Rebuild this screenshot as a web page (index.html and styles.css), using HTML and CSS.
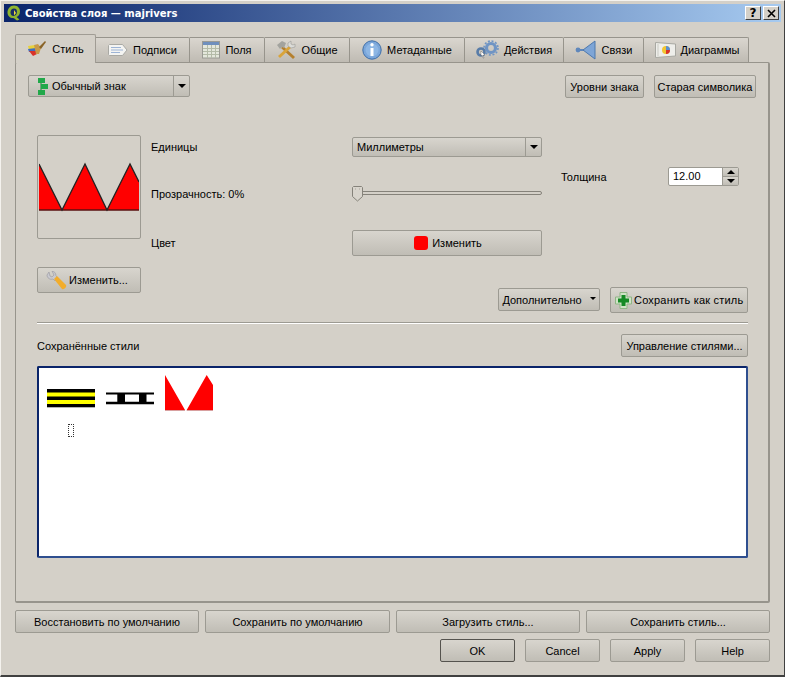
FILE: index.html
```html
<!DOCTYPE html>
<html>
<head>
<meta charset="utf-8">
<title>Свойства слоя — majrivers</title>
<link rel="stylesheet" href="styles.css">
</head>
<body>
<div class="window">
  <div class="titlebar">
    <svg class="qgis" width="16" height="16" viewBox="0 0 16 16"><path d="M8 .5C4 .5 1.500 4 1.500 7.500S4 13 7 13c1.500 0 2.500 1.500 4 2.500l2.500-1-3-2.500c2-1 3.500-2.500 3.500-5.500C14 3.500 12 .5 8 .5z" fill="#8fb52e"/><path d="M8 3.500c-2 0-3.500 1.500-3.500 4S6 11 7.500 11 11 9.500 11 7 10 3.500 8 3.500z" fill="#1a2f66"/><path d="M8 5 10 8 8 10.500z" fill="#f2e23a"/></svg>
    <span class="title">Свойства слоя — majrivers</span>
    <span class="capbtn">?</span>
    <span class="capbtn">
      <svg width="9" height="9" viewBox="0 0 9 9"><path d="M1 1l7 7M8 1L1 8" stroke="#000" stroke-width="1.600"/></svg>
    </span>
  </div>

  <div class="tabs">
    <div class="tab active tab-style">
      <svg width="20" height="18" viewBox="0 0 20 18"><path d="M1 6l7-1 2 4-8 1z" fill="#e8d23c"/><path d="M1 9l8-1 1 3-8 1z" fill="#3f6fc0"/><path d="M2 11l8 0 0 3-4 2z" fill="#d8322a"/><path d="M7 5l4-1 3 4-2 6-3 0z" fill="#c89a4a"/><path d="M12 7l6-6 1 1-5 7z" fill="#8a6428"/></svg>
      Стиль
    </div>
    <div class="tab tab-labels">
      <svg width="20" height="14" viewBox="0 0 20 14"><path d="M1.500 1.500h13l4.500 5.500-4.500 5.500h-13l-1-1v-9z" fill="#f4f4f2" stroke="#a9a9a4"/><path d="M3 4.500h10M3 7h12M3 9.500h9" stroke="#9db4d6"/></svg>
      Подписи
    </div>
    <div class="tab tab-fields">
      <svg width="18" height="18" viewBox="0 0 18 18"><rect x=".5" y=".5" width="17" height="16.500" fill="#e4e7dc" stroke="#9a9a94"/><rect x="1" y="1" width="16" height="3" fill="#6f8fbd"/><path d="M1 7.500h16M1 10.500h16M1 13.500h16M5.500 4v13M9.500 4v13M13.500 4v13" stroke="#b4bba8"/></svg>
      Поля
    </div>
    <div class="tab tab-general">
      <svg width="20" height="20" viewBox="0 0 20 20"><path d="M7 6l12 11-2 2L5 8z" fill="#b5802e"/><path d="M1 5l5-4 4 2-2 5-2-1-2 2z" fill="#a3a39e"/><path d="M13 6 2 16l2 2L15 8z" fill="#d9a43a"/><path d="M15 1l-3 2 0 3 3 2 4-1 0-3-2 1-2-1z" fill="#dcdcd8" stroke="#8f8f8a" stroke-width=".5"/></svg>
      Общие
    </div>
    <div class="tab tab-meta">
      <svg width="20" height="20" viewBox="0 0 20 20"><circle cx="10" cy="10" r="9.200" fill="#7aa6da" stroke="#3f6ea8"/><circle cx="10" cy="10" r="6.500" fill="#8db6e4"/><circle cx="10" cy="4.800" r="1.700" fill="#fff"/><path d="M8.500 8h3v8h-3z" fill="#fff"/></svg>
      Метаданные
    </div>
    <div class="tab tab-actions">
      <svg width="23" height="20" viewBox="0 0 23 20"><circle cx="15" cy="8" r="4.500" fill="none" stroke="#6f94c4" stroke-width="3.200"/><circle cx="15" cy="8" r="7" fill="none" stroke="#6f94c4" stroke-width="1.600" stroke-dasharray="2 1.700"/><circle cx="5" cy="12" r="3.500" fill="none" stroke="#587ca8" stroke-width="2.600"/><path d="M5 11l4 4-2 0 1 3-1 0-1-3-1 1z" fill="#fff" stroke="#555" stroke-width=".4"/></svg>
      Действия
    </div>
    <div class="tab tab-links">
      <svg width="22" height="20" viewBox="0 0 22 20"><circle cx="3" cy="10" r="2.400" fill="#5f87bb"/><path d="M4 9h5v2H4z" fill="#5f87bb"/><path d="M8 10l12-9v18z" fill="#7ea5d6" stroke="#4d78ad" stroke-linejoin="round"/></svg>
      Связи
    </div>
    <div class="tab tab-charts">
      <svg width="21" height="16" viewBox="0 0 21 16"><path d="M.5 .5 20.500 2v12L.5 15.500z" fill="#eeeeea" stroke="#a8a8a2"/><path d="M3 2v12" stroke="#c9c9c2"/><circle cx="11" cy="8" r="4" fill="#f2c531"/><path d="M11 8V4a4 4 0 0 1 4 4z" fill="#5d8fd0"/><path d="M11 8h4a4 4 0 0 1-4 4z" fill="#d8322a"/></svg>
      Диаграммы
    </div>
  </div>

  <div class="pane">
    <div class="top-row">
      <div class="combo combo-type">
        <span class="combo-text">
          <svg width="11" height="17" viewBox="0 0 11 17"><path d="M4 3v11M4 7h3" stroke="#1f7a36"/><rect x="1" y="0" width="7" height="5" fill="#22a84a"/><rect x="4" y="6" width="7" height="5" fill="#22a84a"/><rect x="1" y="12" width="7" height="5" fill="#22a84a"/></svg>
          Обычный знак
        </span>
        <span class="combo-arrow"><i class="arrow"></i></span>
      </div>
      <div class="spacer"></div>
      <div class="btn btn-levels">Уровни знака</div>
      <div class="btn btn-old">Старая символика</div>
    </div>

    <div class="symbol-row">
      <div class="preview">
        <svg width="100" height="100" viewBox="0 0 100 100"><path d="M0 27 23 73 46 27 68 73 91 27 100 45V73H0z" fill="#f00"/><path d="M0 73H100" stroke="#5a1010" stroke-width="1.500"/><path d="M0 27 23 73 46 27 68 73 91 27 100 45" fill="none" stroke="#222" stroke-width="1.300"/></svg>
      </div>
      <div class="symbol-form">
        <div class="form-label">Единицы</div>
        <div class="combo combo-units">
          <span class="combo-text">Миллиметры</span>
          <span class="combo-arrow"><i class="arrow"></i></span>
        </div>
        <div class="form-label">Прозрачность: 0%</div>
        <div class="slider">
          <svg class="slider-handle" width="11" height="16" viewBox="0 0 11 16"><path d="M1.500.5h8l1 1v9L5.500 15 .5 10.500v-9z" fill="#d8d4cc" stroke="#85827a"/><path d="M3 3h1M7 3h1" stroke="#a8a49c"/></svg>
        </div>
        <div class="form-label">Цвет</div>
        <div class="btn btn-color"><i class="swatch"></i>Изменить</div>
      </div>
      <div class="thickness">
        <span class="thickness-label">Толщина</span>
        <div class="spin">
          <span class="spin-value">12.00</span>
          <span class="spin-btns">
            <span class="spin-btn"><i class="arrow arrow-up"></i></span>
            <span class="spin-btn"><i class="arrow"></i></span>
          </span>
        </div>
      </div>
    </div>

    <div class="actions-row">
      <div class="btn btn-change">
        <svg width="21" height="19" viewBox="0 0 21 19"><path d="M3 1 1 4c0 3 3 5 6 4l2 2 3-3-2-2c0-3-2-5-4-5L8 4 6 6 4 5z" fill="#c9c9cf" stroke="#96969e" stroke-width=".6"/><path d="M8 8l3-3 9 9c1 2-2 5-4 4z" fill="#f2ad2c"/></svg>
        Изменить...
      </div>
      <div class="spacer"></div>
      <div class="btn btn-more">Дополнительно<i class="arrow arrow-small"></i></div>
      <div class="btn btn-save-as">
        <svg width="17" height="17" viewBox="0 0 17 17"><path d="M5 .5h7v4.500h4.500v7H12v4.500H5V12H.5V5H5z" fill="#cfe3c6" stroke="#8fb585"/><path d="M6.500 3h4v3.500H14v4h-3.500V14h-4v-3.500H3v-4h3.500z" fill="#158a25"/></svg>
        Сохранить как стиль
      </div>
    </div>

    <div class="separator"></div>

    <div class="saved-head">
      <span>Сохранённые стили</span>
      <div class="spacer"></div>
      <div class="btn btn-manage">Управление стилями...</div>
    </div>

    <div class="style-list">
      <div class="style-item">
        <svg width="48" height="48" viewBox="0 0 48 48"><rect y="14" width="48" height="18.300" fill="#000"/><path d="M0 19.600h48M0 27h48" stroke="#ff0" stroke-width="4"/></svg>
      </div>
      <div class="style-item">
        <svg width="48" height="48" viewBox="0 0 48 48"><path d="M0 18.500h48M0 27.800h48" stroke="#000" stroke-width="2.200"/><rect x="11.300" y="18" width="1" height="10" fill="#000"/><rect x="12" y="18" width="7" height="10" fill="#000"/><rect x="33" y="18" width="7.500" height="10" fill="#000"/><path d="M0 29.500h48" stroke="#bbb"/></svg>
      </div>
      <div class="style-item">
        <svg width="48" height="48" viewBox="0 0 48 48"><path d="M0 0 20 35H0zM21.700 35 41.700 0 48 10V35z" fill="#f00"/><path d="M0 35.500h20M21.700 35.500H48" stroke="#d8a0a0"/></svg>
      </div>
      <div class="focus-item"><i class="focus-rect"></i></div>
    </div>
  </div>

  <div class="footer-row footer-wide">
    <div class="btn">Восстановить по умолчанию</div>
    <div class="btn btn-wider">Сохранить по умолчанию</div>
    <div class="btn">Загрузить стиль...</div>
    <div class="btn">Сохранить стиль...</div>
  </div>
  <div class="footer-row footer-dialog">
    <div class="btn btn-default">OK</div>
    <div class="btn">Cancel</div>
    <div class="btn">Apply</div>
    <div class="btn">Help</div>
  </div>
</div>
</body>
</html>
```
FILE: styles.css
```css
html, body {
    margin: 0;
    padding: 0;
}

body {
    background-color: #d4d0c8;
    font-family: "Liberation Sans", Arial, sans-serif;
    font-size: 11px;
    color: #000;
}

.window {
    box-sizing: border-box;
    width: 785px;
    height: 677px;
    padding: 3px 4px 0 4px;
    background-color: #d4d0c8;
    border-top: 1px solid #f4f2ee;
    border-left: 1px solid #f4f2ee;
    border-right: 1px solid #404040;
    border-bottom: 2px solid #404040;
    overflow: hidden;
}

/* title bar */
.titlebar {
    display: flex;
    align-items: center;
    height: 18px;
    margin: 0 -1px 0 -1px;
    padding: 0 2px 0 2px;
    background: linear-gradient(to right, #0a246a, #a6caf0);
    color: #fff;
    font-family: "DejaVu Sans", sans-serif;
    font-size: 10px;
    font-weight: bold;
}

.qgis {
    margin-right: 3px;
}

.title {
    flex: 1;
}

.capbtn {
    display: flex;
    align-items: center;
    justify-content: center;
    box-sizing: border-box;
    width: 16px;
    height: 14px;
    margin-left: 2px;
    background-color: #d4d0c8;
    border: 1px solid;
    border-color: #fff #404040 #404040 #fff;
    color: #000;
    font-size: 12px;
    font-weight: bold;
}

/* tabs */
.tabs {
    display: flex;
    align-items: flex-end;
    height: 28px;
    margin: 12px 0 0 10px;
    position: relative;
    z-index: 1;
}

.tab {
    box-sizing: border-box;
    display: flex;
    align-items: center;
    justify-content: center;
    gap: 5px;
    height: 25px;
    background: linear-gradient(#dad6cf, #bfbbb3);
    border: 1px solid #97948c;
    border-left-width: 0;
    border-bottom: 0;
    border-radius: 0 2px 0 0;
    white-space: nowrap;
}

.tab.active {
    height: 29px;
    margin-bottom: -1px;
    background: #d4d0c8;
    border-left-width: 1px;
    border-radius: 2px 2px 0 0;
    border-color: #a09c94;
}

.tab-style { width: 81px; }
.tab-labels { width: 94px; }
.tab-fields { width: 75px; }
.tab-general { width: 85px; }
.tab-meta { width: 115px; }
.tab-actions { width: 99px; }
.tab-links { width: 80px; }
.tab-charts { width: 105px; padding-left: 2px; }

/* main pane */
.pane {
    box-sizing: border-box;
    width: 755px;
    height: 541px;
    margin-left: 10px;
    padding: 12px 12px 0 12px;
    border: 1px solid #97948c;
    border-width: 1px 2px 2px 1px;
    border-radius: 2px;
}

.spacer {
    flex: 1;
}

.btn {
    box-sizing: border-box;
    display: flex;
    align-items: center;
    justify-content: center;
    gap: 3px;
    height: 23px;
    background: linear-gradient(#d8d5ce, #c0bdb5);
    border: 1px solid #9c9a92;
    border-radius: 2px;
    white-space: nowrap;
}

.combo {
    box-sizing: border-box;
    display: flex;
    background: linear-gradient(#d8d5ce, #c0bdb5);
    border: 1px solid #9c9a92;
    border-radius: 2px;
}

.combo-text {
    flex: 1;
    display: flex;
    align-items: center;
    gap: 4px;
    padding-left: 4px;
}

.combo-arrow {
    display: flex;
    align-items: center;
    justify-content: center;
    width: 15px;
    border-left: 1px solid #9c9a92;
}

.arrow {
    display: block;
    width: 0;
    height: 0;
    border-left: 4px solid transparent;
    border-right: 4px solid transparent;
    border-top: 4px solid #000;
}

.arrow-up {
    border-top: 0;
    border-bottom: 4px solid #000;
}

.arrow-small {
    margin-left: 5px;
    margin-bottom: 3px;
    border-left-width: 3px;
    border-right-width: 3px;
    border-top-width: 3px;
}

.top-row {
    display: flex;
    align-items: flex-start;
    gap: 10px;
}

.combo-type {
    width: 162px;
    height: 22px;
}

.combo-type .combo-text {
    padding-left: 8px;
}

.btn-levels { width: 79px; }
.btn-old { width: 102px; }

/* symbol block */
.symbol-row {
    display: flex;
    margin: 37px 0 0 9px;
}

.preview {
    box-sizing: border-box;
    width: 104px;
    height: 104px;
    padding: 1px;
    border: 1px solid #9c9a92;
    border-radius: 2px;
}

.preview svg {
    display: block;
}

.symbol-form {
    display: grid;
    grid-template-columns: 201px 190px;
    grid-template-rows: 20px 21px 26px;
    row-gap: 26px;
    align-items: center;
    margin: 2px 0 0 10px;
}

.combo-units {
    height: 20px;
}

.slider {
    position: relative;
    box-sizing: border-box;
    height: 4px;
    margin-top: -2px;
    background-color: #d4d0c8;
    border: 1px solid #85827a;
    border-radius: 2px;
}

.slider-handle {
    position: absolute;
    left: -1px;
    top: -6px;
}

.btn-color {
    height: 26px;
    gap: 4px;
    padding-left: 2px;
}

.swatch {
    display: block;
    width: 14px;
    height: 14px;
    background-color: #f00;
    border-radius: 3px;
}

.thickness {
    display: flex;
    align-items: center;
    width: 178px;
    height: 19px;
    margin: 32px 0 0 19px;
}

.thickness-label {
    width: 107px;
}

.spin {
    box-sizing: border-box;
    display: flex;
    width: 71px;
    height: 19px;
    background-color: #fff;
    border: 1px solid #9c9a92;
    border-radius: 2px;
}

.spin-value {
    flex: 1;
    padding-left: 4px;
    line-height: 17px;
}

.spin-btns {
    display: flex;
    flex-direction: column;
    width: 16px;
}

.spin-btn {
    flex: 1;
    display: flex;
    align-items: center;
    justify-content: center;
    background: linear-gradient(#d8d5ce, #c0bdb5);
    border-left: 1px solid #9c9a92;
    border-bottom: 1px solid #9c9a92;
}

.spin-btn:last-child {
    border-bottom: 0;
}

.actions-row {
    display: flex;
    align-items: flex-end;
    gap: 10px;
    height: 46px;
    margin: 11px 8px 0 9px;
}

.btn-change {
    width: 104px;
    height: 26px;
    align-self: flex-start;
    gap: 2px;
    padding-right: 4px;
}

.btn-more {
    width: 102px;
    margin-bottom: 2px;
}

.btn-save-as {
    width: 138px;
    height: 26px;
    justify-content: flex-start;
    gap: 2px;
    padding-left: 4px;
    letter-spacing: .2px;
}

.separator {
    height: 1px;
    margin: 9px 8px 0 9px;
    background-color: #9c9a92;
    border-bottom: 1px solid #fff;
}

/* saved styles */
.saved-head {
    display: flex;
    align-items: center;
    margin: 10px 8px 0 9px;
}

.btn-manage {
    width: 127px;
}

.style-list {
    box-sizing: border-box;
    display: grid;
    grid-template-columns: repeat(3, 48px);
    grid-auto-rows: 48px;
    column-gap: 11px;
    row-gap: 1px;
    align-content: start;
    height: 192px;
    margin: 9px 8px 0 9px;
    padding: 7px 0 0 8px;
    background-color: #fff;
    border: 2px solid #0a246a;
    border-right-color: #2f4f8f;
    border-bottom-color: #2f4f8f;
    border-radius: 2px;
}

.style-item svg {
    display: block;
}

.focus-item {
    grid-column: 1;
    display: flex;
    justify-content: center;
}

.focus-rect {
    display: block;
    box-sizing: border-box;
    width: 6px;
    height: 13px;
    border: 1px dotted #333;
}

/* dialog buttons */
.footer-row {
    display: flex;
    width: 755px;
    margin-left: 10px;
}

.footer-wide {
    gap: 6px;
    margin-top: 7px;
}

.footer-wide .btn {
    width: 184px;
}

.footer-wide .btn-wider {
    width: 185px;
}

.footer-dialog {
    justify-content: flex-end;
    gap: 10px;
    margin-top: 6px;
}

.footer-dialog .btn {
    width: 75px;
}

.footer-dialog .btn-default {
    border-color: #55534e;
}
```
